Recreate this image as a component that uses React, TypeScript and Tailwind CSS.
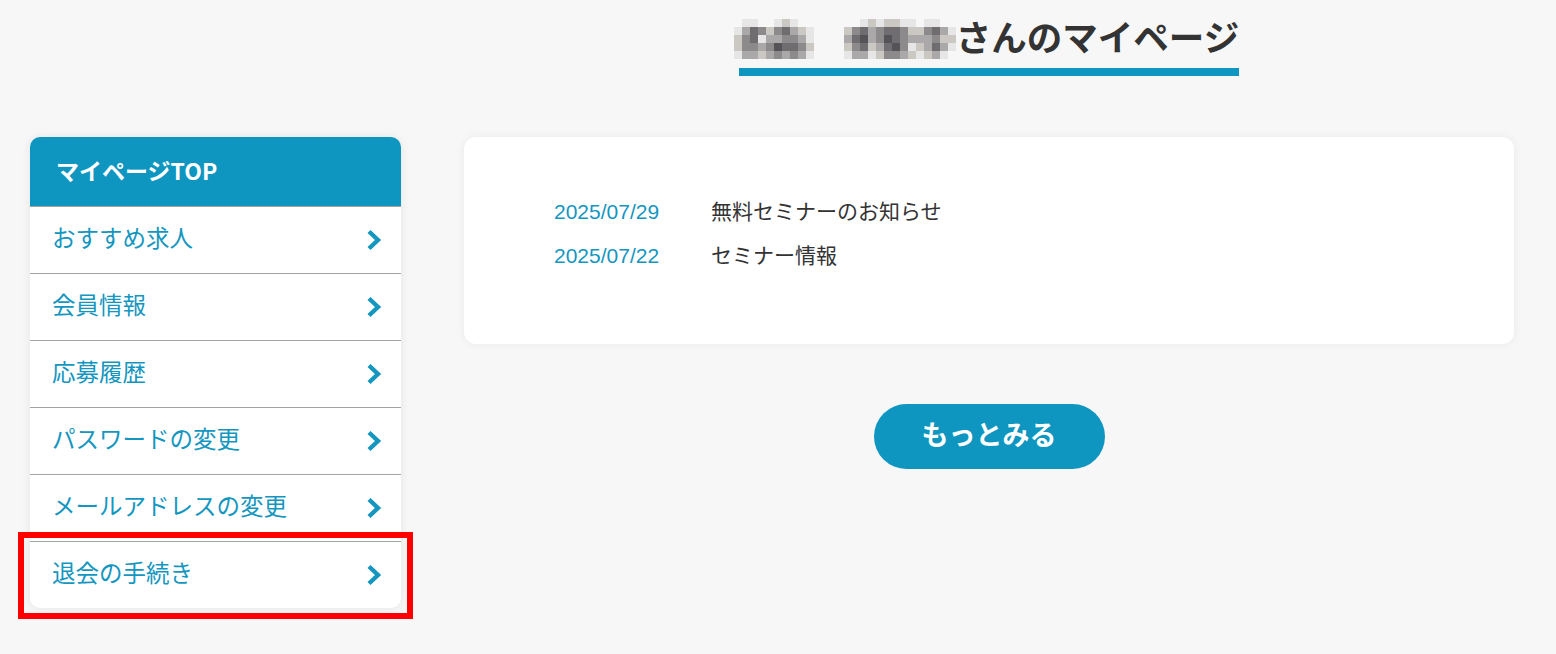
const menuItems = [
  "おすすめ求人",
  "会員情報",
  "応募履歴",
  "パスワードの変更",
  "メールアドレスの変更",
  "退会の手続き",
];

const news = [
  { date: "2025/07/29", title: "無料セミナーのお知らせ" },
  { date: "2025/07/22", title: "セミナー情報" },
];

// mosaic shades for the blurred name
const shades = [
  "bg-transparent",
  "bg-[#e6e6e6]",
  "bg-[#cbc7c3]",
  "bg-[#aaa8a8]",
  "bg-[#8c8a8a]",
  "bg-[#6f6d70]",
  "bg-[#545458]",
];

const mosaicA = [
  [0, 1, 1, 0, 0, 1, 2, 1, 0, 0],
  [1, 3, 5, 4, 2, 4, 5, 3, 2, 1],
  [2, 4, 5, 1, 3, 3, 4, 4, 3, 1],
  [2, 4, 4, 3, 4, 6, 5, 5, 4, 2],
  [1, 3, 3, 2, 3, 4, 3, 4, 3, 1],
];

const mosaicB = [
  [0, 0, 1, 2, 1, 2, 2, 1, 1, 0, 1, 1, 0, 0],
  [2, 4, 5, 3, 4, 5, 5, 4, 2, 2, 4, 5, 3, 1],
  [3, 5, 6, 3, 4, 6, 5, 4, 3, 3, 3, 4, 2, 2],
  [2, 4, 5, 2, 3, 5, 6, 4, 1, 2, 3, 5, 3, 1],
  [1, 3, 3, 1, 2, 4, 4, 3, 2, 1, 2, 3, 1, 0],
];

function Mosaic({ grid }: { grid: number[][] }) {
  return (
    <span className="inline-flex flex-col">
      {grid.map((row, i) => (
        <span key={i} className="flex">
          {row.map((v, j) => (
            <span key={j} className={`block w-[8px] h-[8px] ${shades[v]}`} />
          ))}
        </span>
      ))}
    </span>
  );
}

function Chevron() {
  return (
    <svg width="17" height="22" viewBox="0 0 17 22" fill="none">
      <polyline
        points="3,2.5 12,11 3,19.5"
        stroke="#1496bf"
        strokeWidth="4.4"
        strokeLinecap="butt"
        strokeLinejoin="miter"
      />
    </svg>
  );
}

export default function App() {
  return (
    <div className="min-h-screen bg-[#f7f7f7] font-['Noto_Sans_CJK_JP','Noto_Sans',sans-serif]">
      <div className="flex pl-[30px] pr-[42px]">
        <aside className="relative w-[371px] shrink-0 mt-[137px]">
          <div className="rounded-[10px] overflow-hidden bg-white shadow-[0_0_10px_rgba(0,0,0,0.08)]">
            <div className="h-[69px] bg-[#0e96c0] flex items-center pl-[26px] pb-[2px] text-white text-[23px] font-bold">
              マイページTOP
            </div>
            {menuItems.map((label) => (
              <div
                key={label}
                className="h-[67px] border-t border-[#a3a3a3] flex items-center justify-between pl-[22px] pr-[18px] text-[#1496bf] text-[23.5px]"
              >
                <span className="-mt-[5px]">{label}</span>
                <Chevron />
              </div>
            ))}
          </div>
          <div className="absolute left-[-12px] top-[395px] w-[395px] h-[87px] border-[6px] border-[#ff0000] pointer-events-none" />
        </aside>

        <main className="flex-1 ml-[63px] flex flex-col items-center">
          <div className="h-[137px] flex justify-center">
            <h1 className="mt-[12px] h-[64px] pb-[6px] border-b-[8px] border-[#0e96c0] flex items-center text-[35.5px] leading-[50px] font-bold text-[#333333]">
              <span className="flex items-center gap-[30px] -ml-[5px] mt-[4px]">
                <Mosaic grid={mosaicA} />
                <Mosaic grid={mosaicB} />
              </span>
              <span className="-mt-[2px]">さんのマイページ</span>
            </h1>
          </div>

          <section className="w-full h-[207px] bg-white rounded-[12px] shadow-[0_0_10px_rgba(0,0,0,0.06)] pt-[53px] pl-[90px]">
            {news.map((n) => (
              <div key={n.date} className="flex items-center h-[44px]">
                <span className="w-[157px] text-[#1496bf] text-[21px] font-['Liberation_Sans',sans-serif]">
                  {n.date}
                </span>
                <span className="text-[#333333] text-[21px] -mt-[3px]">{n.title}</span>
              </div>
            ))}
          </section>

          <button className="mt-[60px] w-[231px] h-[65px] rounded-full bg-[#0e96c0] text-white text-[27px] font-bold">
            <span className="relative -top-[2px]">もっとみる</span>
          </button>
        </main>
      </div>
    </div>
  );
}
